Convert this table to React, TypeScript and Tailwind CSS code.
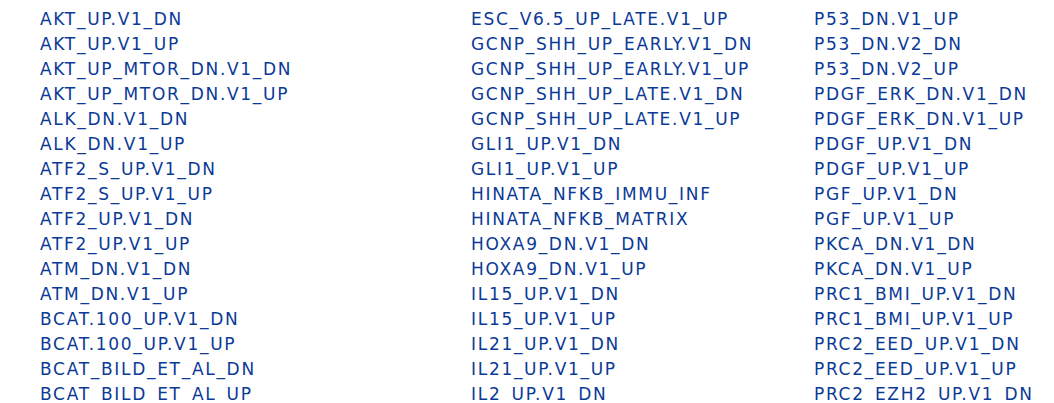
const col1 = ["AKT_UP.V1_DN","AKT_UP.V1_UP","AKT_UP_MTOR_DN.V1_DN","AKT_UP_MTOR_DN.V1_UP","ALK_DN.V1_DN","ALK_DN.V1_UP","ATF2_S_UP.V1_DN","ATF2_S_UP.V1_UP","ATF2_UP.V1_DN","ATF2_UP.V1_UP","ATM_DN.V1_DN","ATM_DN.V1_UP","BCAT.100_UP.V1_DN","BCAT.100_UP.V1_UP","BCAT_BILD_ET_AL_DN","BCAT_BILD_ET_AL_UP"];
const col2 = ["ESC_V6.5_UP_LATE.V1_UP","GCNP_SHH_UP_EARLY.V1_DN","GCNP_SHH_UP_EARLY.V1_UP","GCNP_SHH_UP_LATE.V1_DN","GCNP_SHH_UP_LATE.V1_UP","GLI1_UP.V1_DN","GLI1_UP.V1_UP","HINATA_NFKB_IMMU_INF","HINATA_NFKB_MATRIX","HOXA9_DN.V1_DN","HOXA9_DN.V1_UP","IL15_UP.V1_DN","IL15_UP.V1_UP","IL21_UP.V1_DN","IL21_UP.V1_UP","IL2_UP.V1_DN"];
const col3 = ["P53_DN.V1_UP","P53_DN.V2_DN","P53_DN.V2_UP","PDGF_ERK_DN.V1_DN","PDGF_ERK_DN.V1_UP","PDGF_UP.V1_DN","PDGF_UP.V1_UP","PGF_UP.V1_DN","PGF_UP.V1_UP","PKCA_DN.V1_DN","PKCA_DN.V1_UP","PRC1_BMI_UP.V1_DN","PRC1_BMI_UP.V1_UP","PRC2_EED_UP.V1_DN","PRC2_EED_UP.V1_UP","PRC2_EZH2_UP.V1_DN"];

function Col({ items }: { items: string[] }) {
  return (
    <ul className="flex flex-col">
      {items.map((t) => (
        <li key={t} className="h-[25px] leading-[25px] whitespace-nowrap">
          <a href="#" className="text-[#0b3a96] no-underline">{t}</a>
        </li>
      ))}
    </ul>
  );
}

export default function App() {
  return (
    <div className="w-[1054px] h-[403px] overflow-hidden bg-white pt-[7px] pl-[40px] text-[17px] tracking-[1.7px] font-['DejaVu_Sans',sans-serif]">
      <div className="grid grid-cols-[431px_343px_1fr]">
        <Col items={col1} />
        <Col items={col2} />
        <Col items={col3} />
      </div>
    </div>
  );
}
